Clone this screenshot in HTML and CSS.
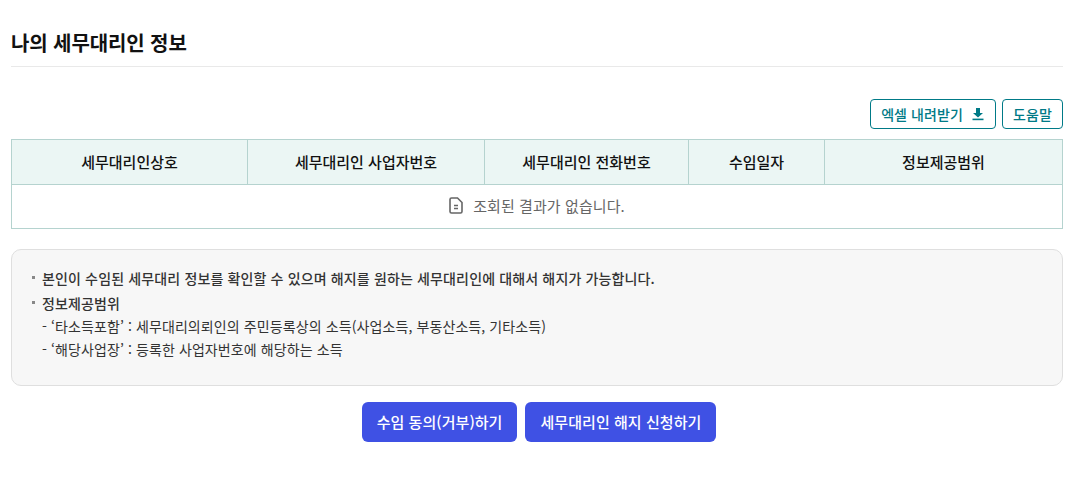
FILE: index.html
```html
<!DOCTYPE html>
<html lang="ko">
<head>
  <meta charset="utf-8">
  <link rel="stylesheet" href="styles.css">
</head>
<body>
  <div class="container">
    <div class="page-title">
      <h2>나의 세무대리인 정보</h2>
    </div>

    <div class="toolbar">
      <button class="btn-line">엑셀 내려받기
        <svg class="icon-download" viewBox="0 0 12 14" width="12" height="14"><path d="M4 1h4v5h3L6 10.6 1 6h3z" fill="#007a87"/><rect x="0.5" y="11.6" width="11" height="1.6" fill="#007a87"/></svg>
      </button>
      <button class="btn-line">도움말</button>
    </div>

    <table class="grid">
      <colgroup>
        <col class="col-1">
        <col class="col-2">
        <col class="col-3">
        <col class="col-4">
        <col>
      </colgroup>
      <thead>
        <tr>
          <th>세무대리인상호</th>
          <th>세무대리인 사업자번호</th>
          <th>세무대리인 전화번호</th>
          <th>수임일자</th>
          <th>정보제공범위</th>
        </tr>
      </thead>
      <tbody>
        <tr>
          <td colspan="5">
            <span class="empty">
              <svg viewBox="0 0 14 17" width="14" height="17"><path d="M2.5 1h6L13 5.5V14.5a1.5 1.5 0 0 1-1.5 1.5h-9A1.5 1.5 0 0 1 1 14.5v-12A1.5 1.5 0 0 1 2.5 1z" fill="none" stroke="#666" stroke-width="1.6"/><path d="M5 8.5h4M5 11.5h4" stroke="#666" stroke-width="1.5"/></svg>
              조회된 결과가 없습니다.
            </span>
          </td>
        </tr>
      </tbody>
    </table>

    <div class="notice">
      <ul>
        <li class="strong">본인이 수임된 세무대리 정보를 확인할 수 있으며 해지를 원하는 세무대리인에 대해서 해지가 가능합니다.</li>
        <li class="strong">정보제공범위
          <p class="first">- ‘타소득포함’ : 세무대리의뢰인의 주민등록상의 소득(사업소득, 부동산소득, 기타소득)</p>
          <p class="last">- ‘해당사업장’ : 등록한 사업자번호에 해당하는 소득</p>
        </li>
      </ul>
    </div>

    <div class="actions">
      <button class="btn-primary">수임 동의(거부)하기</button>
      <button class="btn-primary">세무대리인 해지 신청하기</button>
    </div>
  </div>
</body>
</html>
```

FILE: styles.css
```css
body {
  margin: 0;
  background: #fff;
  color: #222;
  font-family: "Noto Sans CJK KR", "Noto Sans", sans-serif;
}

.container {
  padding: 0 20px 0 11px;
}

.page-title {
  padding-top: 28px;
  height: 38px;
  border-bottom: 1px solid #e9e9e9;
}

.page-title h2 {
  margin: 0;
  font-size: 20px;
  line-height: 30px;
  font-weight: 700;
  color: #111;
  letter-spacing: -0.1px;
}

.toolbar {
  display: flex;
  justify-content: flex-end;
  gap: 6px;
  margin-top: 32px;
  margin-bottom: 10px;
}

button {
  font-family: inherit;
  cursor: pointer;
}

.btn-line {
  display: flex;
  align-items: center;
  gap: 9px;
  height: 30px;
  padding: 0 10px 1px;
  background: #fff;
  border: 1px solid #007a87;
  border-radius: 4px;
  color: #007a87;
  font-size: 14px;
  font-weight: 500;
  letter-spacing: 0.1px;
}

.icon-download {
  margin-right: 1px;
}

.grid {
  width: 100%;
  border-collapse: collapse;
  table-layout: fixed;
  border: 1px solid #b5d3cf;
}

.col-1 { width: 236px; }
.col-2 { width: 237px; }
.col-3 { width: 204px; }
.col-4 { width: 136px; }

.grid th {
  height: 45px;
  padding: 0 0 2px;
  box-sizing: border-box;
  background: #ebf6f4;
  border: 1px solid #b5d3cf;
  color: #111;
  font-size: 15px;
  font-weight: 500;
}

.grid td {
  height: 43px;
  padding: 0;
  text-align: center;
  color: #666;
  font-size: 15px;
  letter-spacing: 0.08px;
}

.empty {
  display: inline-flex;
  align-items: center;
  gap: 10px;
}

.notice {
  margin-top: 20px;
  height: 137px;
  box-sizing: border-box;
  padding: 16px 19px;
  background: #f7f7f7;
  border: 1px solid #dfdfdf;
  border-radius: 10px;
  font-size: 14px;
  line-height: 24px;
  color: #333;
}

.notice ul {
  margin: 0;
  padding: 0;
  list-style: none;
}

.notice li {
  position: relative;
  padding-left: 11px;
}

.notice li::before {
  content: '';
  position: absolute;
  left: 1px;
  top: 10px;
  width: 3px;
  height: 3px;
  background: #888;
}

.notice li.strong {
  font-weight: 500;
  letter-spacing: 0.14px;
}

.notice li.strong:first-child {
  margin-bottom: 1px;
}

.notice p {
  margin: 0;
  font-weight: 400;
  letter-spacing: 0.1px;
}

.notice p.first,
.notice p.last {
  margin-top: -1px;
}

.actions {
  display: flex;
  justify-content: center;
  gap: 8px;
  margin-top: 16px;
  padding-left: 4px;
}

.btn-primary {
  height: 40px;
  padding: 0 15px 2px;
  background: #3f51e4;
  border: 0;
  border-radius: 6px;
  color: #fff;
  font-size: 15px;
  font-weight: 500;
  letter-spacing: 0.05px;
}
```
